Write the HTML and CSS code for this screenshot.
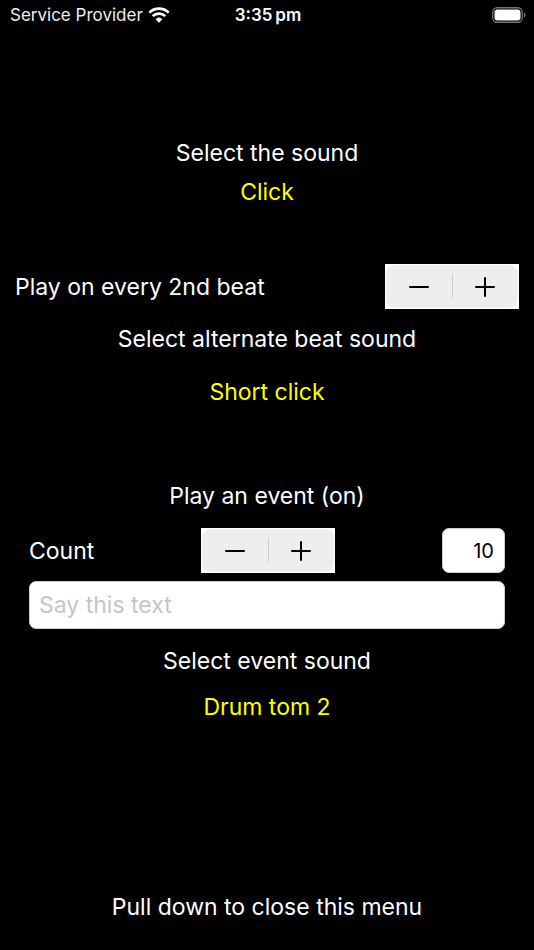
FILE: index.html
```html
<!DOCTYPE html>
<html lang="en">
<head>
<meta charset="utf-8">
<meta name="viewport" content="width=device-width, initial-scale=1">
<title>Sound settings</title>
<link rel="stylesheet" href="styles.css">
</head>
<body>
<header class="status">
  <div class="carrier"><span>Service Provider</span>
    <svg class="wifi" viewBox="0 0 22 16" aria-hidden="true"><path d="M1.3 5.6a13.8 13.8 0 0 1 19.4 0M4.7 9.1a9 9 0 0 1 12.6 0" fill="none" stroke="#fff" stroke-width="2.7"/><path d="M11 15.8l-3.4-3.6a5 5 0 0 1 6.8 0z" fill="#fff"/></svg>
  </div>
  <time class="clock">3:35&#8201;pm</time>
  <svg class="battery" viewBox="0 0 34 16" role="img" aria-label="Battery full"><rect x=".75" y=".75" width="29.5" height="14.5" rx="4.5" fill="none" stroke="#757575" stroke-width="1.3"/><rect x="2.5" y="2.5" width="26" height="11" rx="3" fill="#fff"/><path d="M32 5.4c2 .9 2 4.3 0 5.2z" fill="#757575"/></svg>
</header>
<main class="menu">
  <section class="group sound">
    <h2 class="label">Select the sound</h2>
    <button class="choice" type="button">Click</button>
  </section>
  <section class="group alternate">
    <div class="row beat">
      <span class="label">Play on every 2nd beat</span>
      <div class="stepper">
        <button type="button" aria-label="Fewer beats"><svg viewBox="0 0 22 22"><path d="M2 11h18"/></svg></button>
        <button type="button" aria-label="More beats"><svg viewBox="0 0 22 22"><path d="M2 11h18M11 2v18"/></svg></button>
      </div>
    </div>
    <h2 class="label">Select alternate beat sound</h2>
    <button class="choice" type="button">Short click</button>
  </section>
  <section class="group event">
    <h2 class="label">Play an event (on)</h2>
    <div class="row count">
      <label class="label" for="count">Count</label>
      <div class="stepper">
        <button type="button" aria-label="Decrease count"><svg viewBox="0 0 22 22"><path d="M2 11h18"/></svg></button>
        <button type="button" aria-label="Increase count"><svg viewBox="0 0 22 22"><path d="M2 11h18M11 2v18"/></svg></button>
      </div>
      <input class="field number" id="count" type="text" inputmode="numeric" value="10">
    </div>
    <input class="field speech" type="text" placeholder="Say this text" aria-label="Say this text">
    <h2 class="label">Select event sound</h2>
    <button class="choice" type="button">Drum tom 2</button>
  </section>
</main>
<footer class="label hint">Pull down to close this menu</footer>
</body>
</html>
```
FILE: styles.css
```css
* { box-sizing: border-box; }
body {
  margin: 0;
  min-height: 100vh;
  display: flex;
  flex-direction: column;
  background: #000;
  color: #fff;
  font: 23px/32px Inter, sans-serif;
}
button, input { font: inherit; }
.status {
  display: grid;
  grid-template-columns: 1fr auto 1fr;
  align-items: center;
  height: 30px;
  padding: 0 8px 0 10px;
  font-size: 17px;
  line-height: 24px;
}
.carrier { display: flex; align-items: center; gap: 5px; white-space: nowrap; color: #eee; }
.wifi { width: 22px; height: 16px; }
.clock { font-weight: 600; }
.battery { width: 34px; height: 16px; justify-self: end; }
.menu { flex: 1; padding-top: 107px; }
.group { display: flex; flex-direction: column; align-items: center; }
.label { margin: 0; font-size: 23px; font-weight: 400; line-height: 32px; }
.choice {
  padding: 0;
  border: 0;
  background: none;
  color: #ff0;
  line-height: 32px;
}
.sound { gap: 7px; }
.alternate { margin-top: 56px; }
.row { display: flex; align-items: center; justify-content: space-between; width: 100%; }
.beat { padding: 0 15px; margin-bottom: 14px; }
.alternate .choice { margin-top: 21px; }
.stepper { position: relative; width: 134px; height: 45px; background: #fff; }
.stepper {
  display: flex;
  padding: 1px;
}
.stepper button {
  flex: 1;
  display: flex;
  align-items: center;
  justify-content: center;
  padding: 0;
  border: 0;
  background: #eee;
}
.stepper button:first-child { border-radius: 9px 0 0 9px; }
.stepper button:last-child { border-radius: 0 9px 9px 0; }
.stepper svg { width: 22px; height: 22px; fill: none; stroke: #000; stroke-width: 2; stroke-linecap: round; }
.stepper::after {
  content: "";
  position: absolute;
  left: 50%;
  top: 10px;
  bottom: 10px;
  border-left: 1px solid #ccc;
}
.event { margin-top: 72px; padding: 0 29px; }
.count { margin-top: 16px; }
.field { border: 1px solid #ccc; border-radius: 7px; background: #fff; color: #000; }
.number { width: 63px; height: 45px; padding: 0 10px; font-size: 20px; text-align: right; }
.speech { width: 100%; height: 48px; margin: 8px 0 16px; padding: 0 9px; }
.speech::placeholder { color: #c5c5c7; opacity: 1; }
.event .choice { margin-top: 14px; }
.hint { padding-bottom: 27px; text-align: center; }
```
